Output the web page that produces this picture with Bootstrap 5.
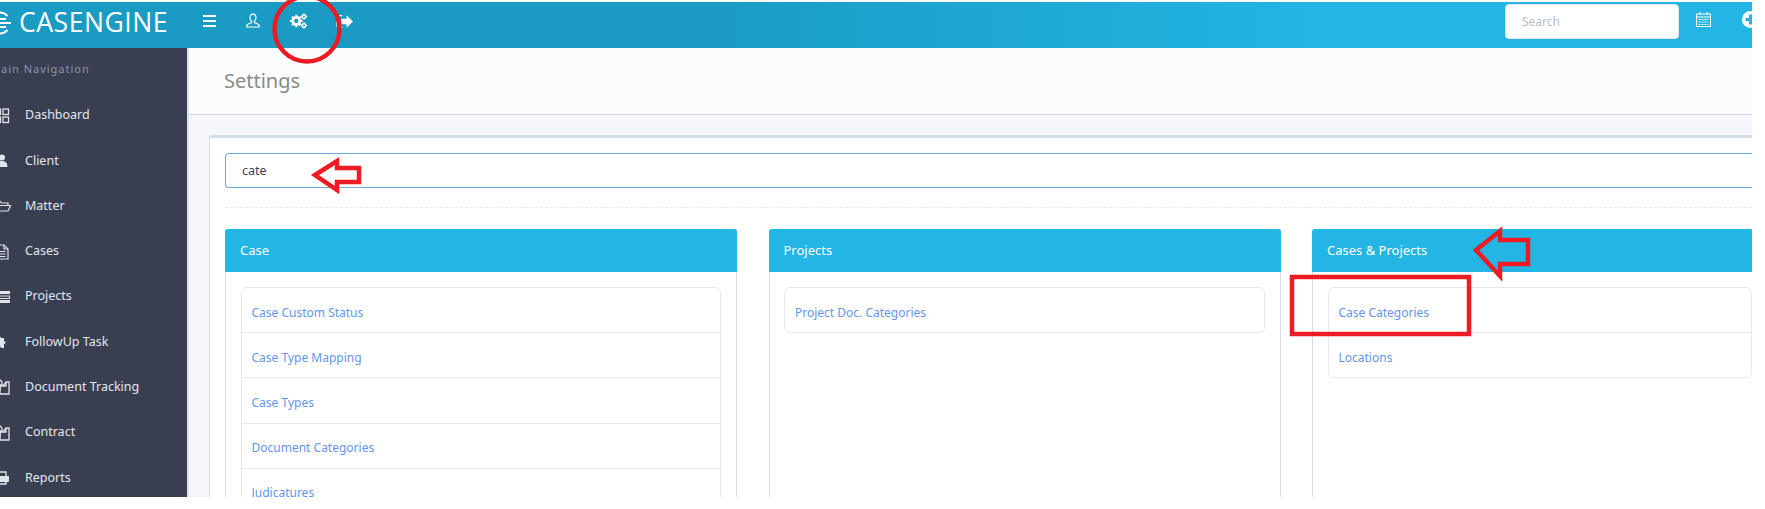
<!DOCTYPE html>
<html lang="en">
<head>
<meta charset="utf-8">
<title>Settings</title>
<link href="https://cdn.jsdelivr.net/npm/bootstrap@5.3.0/dist/css/bootstrap.min.css" rel="stylesheet">
<style>
html,body{background:#fff;overflow:hidden;height:509px}
body{font-family:"Noto Sans","Open Sans",sans-serif;font-size:12px;color:#3e4b5b;position:relative}
.shot{width:1752px;height:495px;margin-top:2px;overflow:hidden;background:#f4f6fb}
.topbar{height:46px;background:linear-gradient(90deg,#1a9bc3 0%,#1a9bc3 40%,#23b5e4 75%,#23b5e4 100%);color:#fff}
.brand{width:187px;flex:none;font-size:26.6px;font-weight:500;line-height:1;letter-spacing:.5px;font-family:"Open Sans",sans-serif;white-space:nowrap;overflow:hidden;height:46px;padding-bottom:5px}
.brand svg{margin-left:-11px;margin-right:8px;flex:none}
.tb-ico{display:flex;align-items:center;justify-content:center}
.tb-menu{margin-top:-8px;padding-left:14px}
.tb-slot{justify-content:center;width:18px}
.tb-gap-a{margin-left:25px}
.tb-gap-b{margin-left:28px}
.tb-gap-c{margin-left:28px}
.tb-search{width:174px;height:35px;margin-top:-7px;background:#fff;border:1px solid #e3e7ed;border-radius:4px;padding:0 16px;font-size:12px;color:#b6bcc7;line-height:33px}
.tb-cal{margin-left:17px;margin-top:-12px}
.tb-plus{margin-left:31px;margin-right:-7px;margin-top:-12px}
.side{width:187px;flex:none;background:#3a3e51;color:#dde3ea}
.side-head{font-size:11px;letter-spacing:1px;color:#8d94a8;padding:13px 0 0 0;height:45px;overflow:hidden;white-space:nowrap}
.side-head span{display:block;margin-left:-10px}
.side-item{height:45.3px;font-size:12.5px;color:#e2e7ee;padding-left:25px;position:relative}
.side-item svg{position:absolute;left:-6px;top:50%;margin-top:-8px}
.content{flex:1 1 auto;min-width:0;border-left:2px solid #dfe4ec}
.pagehead{height:67px;background:#fbfcfe;border-bottom:1px solid #cfd9e3;padding:0 0 0 35px;font-size:20px;color:#8a8a8a}
.mainbox{margin:20px 0 0 20px;background:#fff;border:1px solid #d3dde6;border-top-width:3px;border-right:0;border-radius:3px 0 0 0;padding:15px 0 15px 15px;height:400px}
.faux-input{height:35px;border:1px solid #6fa8dc;border-right:0;border-radius:4px 0 0 4px;padding:0 16px;font-size:12.5px;color:#3a3f55;line-height:33px;background:#fff}
.dash{border-top:1px dashed #e6e9ee;margin:19px 0 21px}
.cols{display:flex;gap:31.5px}
.pane{width:512px;flex:none;border:1px solid #d3dde6;border-top:0;border-radius:3px 3px 0 0;height:300px;background:#fff}
.pane.cut{width:440px;border-right:0}
.pane-head{height:43px;background:#23b5e4;color:#fff;font-size:13px;padding-left:15px;margin:0 -1px;border-radius:3px 3px 0 0}
.pane-body{padding:15px 15px 0 14.5px}
.pane .list-group{--bs-list-group-border-color:#e5e8ec;--bs-list-group-item-padding-y:0;--bs-list-group-item-padding-x:10px;font-size:12px}
.pane .list-group-item{height:46.2px;display:flex;align-items:center;color:#6495ed;text-decoration:none;border-width:1px;margin-top:-1px;padding-left:10px;padding-top:5px}
.pane .list-group-item:first-child{margin-top:0}
.overlay{position:absolute;left:0;top:0;pointer-events:none}
</style>
</head>
<body>
<div class="shot d-flex flex-column">
  <div class="topbar d-flex align-items-center flex-shrink-0">
    <div class="brand d-flex align-items-center">
      <svg width="22" height="24" viewBox="0 0 22 24" fill="none" stroke="#fff" stroke-width="2"><path d="M18.500 5A10.500 10.500 0 1 0 18.500 19"/><path d="M1 12H22M4 8H17M4 16H17"/></svg>CASENGINE
    </div>
    <div class="tb-menu d-flex align-items-center">
      <span class="tb-slot tb-ico"><svg width="14" height="12" viewBox="0 0 14 12" fill="#fff"><rect y="0" width="13" height="2"/><rect y="5" width="13" height="2"/><rect y="10" width="13" height="2"/></svg></span>
      <span class="tb-slot tb-ico tb-gap-a"><svg width="16" height="16" viewBox="0 0 16 16" fill="none" stroke="#fff" stroke-width="1.200"><path d="M8 1.200c-2 0-3 1.500-3 3.400 0 1.600.7 3 1.600 3.800v1.200c-1.600.7-5 1.400-5 3.400v1h12.800v-1c0-2-3.400-2.700-5-3.400V8.400c.9-.8 1.600-2.200 1.600-3.800 0-1.900-1-3.400-3-3.400z"/></svg></span>
      <span class="tb-slot tb-ico tb-gap-b"><svg width="22" height="20" viewBox="0 0 20 18" fill="#fff"><circle cx="7" cy="9" r="4" fill="none" stroke="#fff" stroke-width="3.200"/><path stroke="#fff" stroke-width="2.200" d="M7 2V4M7 14v2M0 9h2M12 9h2M2.200 4.200l1.400 1.400M10.400 12.400l1.400 1.400M2.200 13.800l1.400-1.400M10.400 5.600l1.400-1.400"/><circle cx="15.500" cy="4" r="2" fill="none" stroke="#fff" stroke-width="1.700"/><circle cx="15.500" cy="14" r="2" fill="none" stroke="#fff" stroke-width="1.700"/><path stroke="#fff" stroke-width="1.200" d="M15.500 .5v1.200M15.500 6.300v1.200M12 4h1.200M17.800 4H19M15.500 10.500v1.200M15.500 16.300v1.200M12 14h1.200M17.800 14H19"/></svg></span>
      <span class="tb-slot tb-ico tb-gap-c"><svg width="18" height="15" viewBox="0 0 17 14" fill="#fff"><path d="M6 1.500H2.500A1.500 1.500 0 0 0 1 3v8a1.500 1.500 0 0 0 1.500 1.500H6" fill="none" stroke="#fff" stroke-width="1.300"/><path d="M5 4.500h5V1l6 6-6 6V9.500H5z"/></svg></span>
    </div>
    <div class="tb-search ms-auto">Search</div>
    <span class="tb-ico tb-cal"><svg width="15" height="15" viewBox="0 0 15 15" fill="none" stroke="#fff"><rect x=".5" y="2" width="14" height="12.500"/><path d="M.5 5h14M4 0v3M11 0v3"/><path stroke-dasharray="2 1" d="M2.500 7.500h10M2.500 10h10M2.500 12.500h10"/></svg></span>
    <span class="tb-ico tb-plus"><svg width="17" height="17" viewBox="0 0 17 17"><circle cx="8.500" cy="8.500" r="8.500" fill="#fff"/><path d="M7 3.500h3V7h3.500v3H10v3.500H7V10H3.500V7H7z" fill="#23b5e4"/></svg></span>
  </div>
  <div class="d-flex flex-grow-1" style="min-height:0">
    <nav class="side">
      <div class="side-head"><span>Main Navigation</span></div>
      <div class="side-item d-flex align-items-center"><svg width="16" height="16" viewBox="0 0 16 16" fill="none" stroke="#dfe4ea" stroke-width="1.300"><rect x="1" y="1" width="5.500" height="5.500"/><rect x="9" y="1" width="5.500" height="5.500"/><rect x="1" y="9" width="5.500" height="5.500"/><rect x="9" y="9" width="5.500" height="5.500"/></svg>Dashboard</div>
      <div class="side-item d-flex align-items-center"><svg width="16" height="16" viewBox="0 0 16 16" fill="#dfe4ea"><circle cx="8" cy="4.500" r="3"/><path d="M2.500 14c0-4 2-6 5.500-6s5.500 2 5.500 6z"/></svg>Client</div>
      <div class="side-item d-flex align-items-center"><svg width="18" height="16" viewBox="0 0 18 16" fill="none" stroke="#dfe4ea" stroke-width="1.200"><path d="M1 13V3h5l1.500 2H14v2.500"/><path d="M1 13l3-5.500h12.500L14 13z"/></svg>Matter</div>
      <div class="side-item d-flex align-items-center"><svg width="16" height="16" viewBox="0 0 16 16" fill="none" stroke="#dfe4ea" stroke-width="1.200"><path d="M2 1h8l4 4v10H2z"/><path d="M10 1v4h4M4.500 7.500h7M4.500 10h7M4.500 12.500h7"/></svg>Cases</div>
      <div class="side-item d-flex align-items-center"><svg width="17" height="16" viewBox="0 0 17 16" fill="#dfe4ea"><rect x="1" y="2" width="15" height="3"/><rect x="1.500" y="7" width="14" height="2.500" fill="none" stroke="#dfe4ea"/><rect x="1" y="11" width="15" height="3"/></svg>Projects</div>
      <div class="side-item d-flex align-items-center"><svg width="16" height="16" viewBox="0 0 16 16" fill="#dfe4ea"><path d="M1 4h3c0-2 3-2 3 0h3v3c2 0 2 3 0 3v4H7c0-2-3-2-3 0H1v-3c2 0 2-3 0-3z"/></svg>FollowUp Task</div>
      <div class="side-item d-flex align-items-center"><svg width="17" height="16" viewBox="0 0 17 16" fill="none" stroke="#dfe4ea" stroke-width="1.300"><path d="M1 1h5l2 2v3H6v5H1z"/><path d="M6 7h3l3-4h3v12H6z"/><path d="M9 7h3V3"/></svg>Document Tracking</div>
      <div class="side-item d-flex align-items-center"><svg width="17" height="16" viewBox="0 0 17 16" fill="none" stroke="#dfe4ea" stroke-width="1.300"><path d="M1 1h5l2 2v3H6v5H1z"/><path d="M6 7h3l3-4h3v12H6z"/><path d="M9 7h3V3"/></svg>Contract</div>
      <div class="side-item d-flex align-items-center"><svg width="16" height="16" viewBox="0 0 16 16" fill="#dfe4ea"><rect x="1" y="6" width="14" height="6" rx="1"/><path d="M4 6V2h8v4M4 12v2h8v-2" fill="none" stroke="#dfe4ea" stroke-width="1.300"/></svg>Reports</div>
    </nav>
    <main class="content">
      <div class="pagehead d-flex align-items-center">Settings</div>
      <div class="mainbox">
        <div class="faux-input">cate</div>
        <div class="dash"></div>
        <div class="cols">
          <section class="pane">
            <div class="pane-head d-flex align-items-center">Case</div>
            <div class="pane-body"><div class="list-group">
              <a class="list-group-item" href="#">Case Custom Status</a>
              <a class="list-group-item" href="#">Case Type Mapping</a>
              <a class="list-group-item" href="#">Case Types</a>
              <a class="list-group-item" href="#">Document Categories</a>
              <a class="list-group-item" href="#">Judicatures</a>
            </div></div>
          </section>
          <section class="pane">
            <div class="pane-head d-flex align-items-center">Projects</div>
            <div class="pane-body"><div class="list-group">
              <a class="list-group-item" href="#">Project Doc. Categories</a>
            </div></div>
          </section>
          <section class="pane cut">
            <div class="pane-head d-flex align-items-center">Cases &amp; Projects</div>
            <div class="pane-body pe-0"><div class="list-group">
              <a class="list-group-item" href="#">Case Categories</a>
              <a class="list-group-item" href="#">Locations</a>
            </div></div>
          </section>
        </div>
      </div>
    </main>
  </div>
</div>
<svg class="overlay" width="1765" height="509" viewBox="0 0 1765 509" fill="none" stroke="#ed1c24" stroke-width="4.500">
  <ellipse cx="307" cy="29" rx="32.500" ry="32.500"/>
  <path d="M315 175 337 161V168H359V182H337V190z"/>
  <path d="M1476 250 1500 231V240H1528V264H1500V276z"/>
  <rect x="1292" y="277" width="177" height="57"/>
</svg>
<script src="https://cdn.jsdelivr.net/npm/bootstrap@5.3.0/dist/js/bootstrap.bundle.min.js"></script>
</body>
</html>
